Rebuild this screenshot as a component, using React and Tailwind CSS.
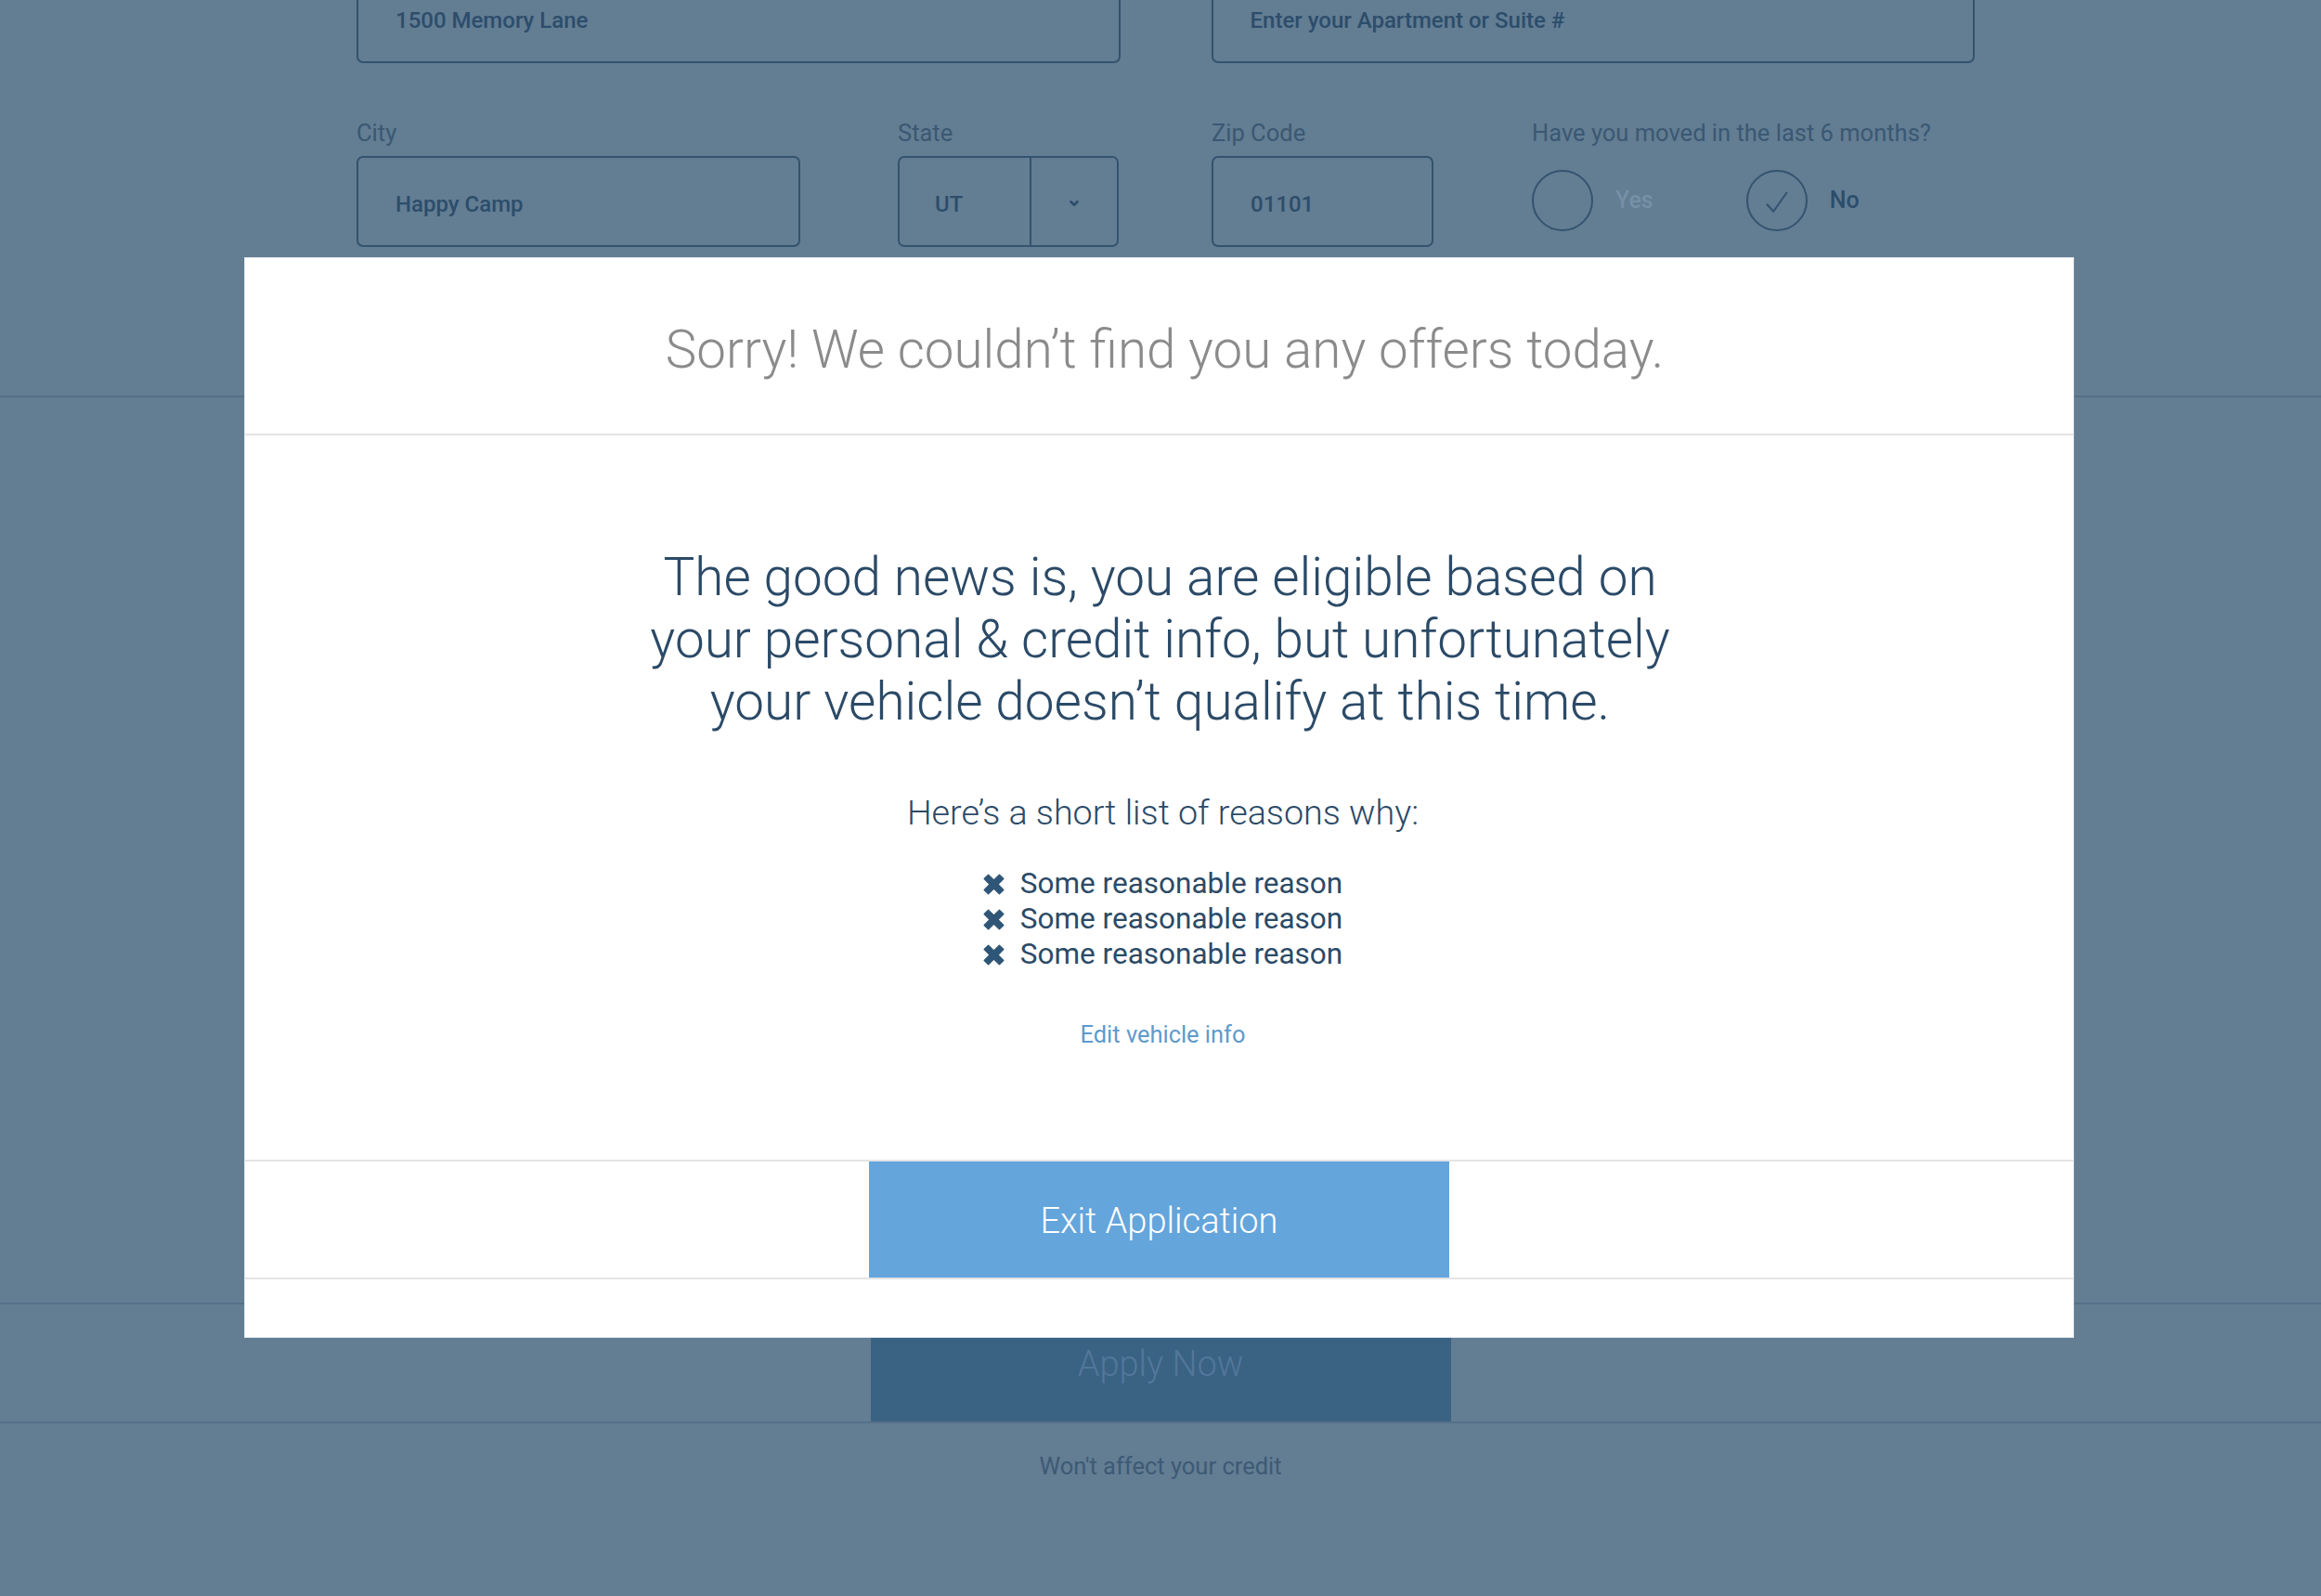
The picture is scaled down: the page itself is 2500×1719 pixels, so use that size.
function Input({ children, className = '' }) {
    return (
        <div className={`h-[98px] rounded-[7px] border-2 border-[#33536f] flex items-center pl-[40px] pt-[6px] ${className}`}>
            <span className="text-[24px] font-medium text-[#2c4d6b]">{children}</span>
        </div>
    );
}

function Label({ children }) {
    return <p className="text-[25.5px] leading-[28px] text-[#3a5872] mb-[11px]">{children}</p>;
}

function Radio({ checked, label, muted }) {
    return (
        <div className="flex items-center">
            <div className="w-[66px] h-[66px] rounded-full border-2 border-[#33536f] flex items-center justify-center">
                {checked && (
                    <svg className="w-[36px] h-[36px] mt-[4px]" viewBox="0 0 24 24" fill="none" stroke="#33536f" strokeWidth="1.4" strokeLinecap="round" strokeLinejoin="round">
                        <path d="M5 13.5l4.5 5L19 5" />
                    </svg>
                )}
            </div>
            <span className={`ml-[24px] text-[25px] font-medium ${muted ? 'text-[#7690a6]' : 'text-[#2c4d6b]'}`}>{label}</span>
        </div>
    );
}

function CrossIcon() {
    return (
        <svg className="w-[23px] h-[23px] mr-[17px] shrink-0" viewBox="0 0 24 24" fill="#2f5677">
            <path d="M1.2 5.8L5.8 1.2 12 7.4l6.2-6.2 4.6 4.6L16.6 12l6.2 6.2-4.6 4.6L12 16.6l-6.2 6.2-4.6-4.6L7.4 12z" stroke="#2f5677" strokeWidth="1.4" strokeLinejoin="round" />
        </svg>
    );
}

export default function App() {
    const reasons = ['Some reasonable reason', 'Some reasonable reason', 'Some reasonable reason'];

    return (
        <div className="relative w-[2500px] h-[1719px] overflow-hidden bg-[#637d93] font-['Roboto','Liberation_Sans',sans-serif]">
            {/* Page behind the overlay */}
            <div className="h-[428px] flex flex-col border-b-2 border-[#557089]">
                <div className="ml-[384px] w-[1743px] -mt-[30px]">
                    <div className="grid grid-cols-2 gap-[98px]">
                        <Input>1500 Memory Lane</Input>
                        <Input>Enter your Apartment or Suite #</Input>
                    </div>

                    <div className="flex mt-[61px]">
                        <div className="w-[478px]">
                            <Label>City</Label>
                            <Input>Happy Camp</Input>
                        </div>
                        <div className="w-[238px] ml-[105px]">
                            <Label>State</Label>
                            <div className="h-[98px] rounded-[7px] border-2 border-[#33536f] flex">
                                <div className="w-[142px] border-r-2 border-[#33536f] flex items-center pl-[38px] pt-[6px] text-[24px] font-medium text-[#2c4d6b]">UT</div>
                                <div className="flex-1 flex items-center justify-center pt-[4px]">
                                    <svg className="w-[14px] h-[14px]" viewBox="0 0 12 12" fill="none" stroke="#2c4d6b" strokeWidth="2.2" strokeLinecap="round" strokeLinejoin="round">
                                        <path d="M3 4.5l3 3 3-3" />
                                    </svg>
                                </div>
                            </div>
                        </div>
                        <div className="w-[239px] ml-[100px]">
                            <Label>Zip Code</Label>
                            <Input>01101</Input>
                        </div>
                        <div className="ml-[106px]">
                            <Label>Have you moved in the last 6 months?</Label>
                            <div className="flex items-center gap-[100px] mt-[26px]">
                                <Radio label="Yes" muted />
                                <Radio label="No" checked />
                            </div>
                        </div>
                    </div>
                </div>
            </div>

            <div className="h-[977px] border-b-2 border-[#557089]" />

            <div className="h-[128px] border-b-2 border-[#557089] flex justify-center">
                <button className="w-[625px] h-full bg-[#3a6283] text-[38px] font-light text-[#52779a] pt-[3px]">Apply Now</button>
            </div>

            <p className="mt-[27px] text-center text-[25.5px] text-[#3d5a74]">Won't affect your credit</p>

            {/* Modal */}
            <div className="absolute left-[263px] top-[277px] w-[1971px] h-[1164px] bg-white border border-[#dde4ea] flex flex-col">
                <div className="h-[191px] border-b-2 border-[#e4e4e4] flex items-center justify-center pt-[10px] pl-[12px]">
                    <h2 className="text-[56.5px] font-light text-[#8b8b8b]">Sorry! We couldn’t find you any offers today.</h2>
                </div>

                <div className="flex-1 flex flex-col items-center pt-[119px] pl-[8px]">
                    <p className="pr-[6px] text-[56.7px] leading-[67px] font-light text-center text-[#2b4a67]">
                        The good news is, you are eligible based on<br />
                        your personal &amp; credit info, but unfortunately<br />
                        your vehicle doesn’t qualify at this time.
                    </p>
                    <p className="mt-[66px] text-[37.7px] leading-[40px] font-light text-[#2b4a67]">Here’s a short list of reasons why:</p>
                    <ul className="mt-[38px]">
                        {reasons.map((reason, i) => (
                            <li key={i} className="flex items-center h-[38px] text-[31.5px] text-[#2b4a67]">
                                <CrossIcon />
                                {reason}
                            </li>
                        ))}
                    </ul>
                    <a className="mt-[52px] text-[25.4px] leading-[30px] text-[#5e9acb]">Edit vehicle info</a>
                </div>

                <div className="h-[129px] border-y-2 border-[#e4e4e4] flex justify-center">
                    <button className="w-[625px] h-full bg-[#64a5dc] text-white text-[38px] font-light pt-[3px]">Exit Application</button>
                </div>
                <div className="h-[62px]" />
            </div>
        </div>
    );
}
